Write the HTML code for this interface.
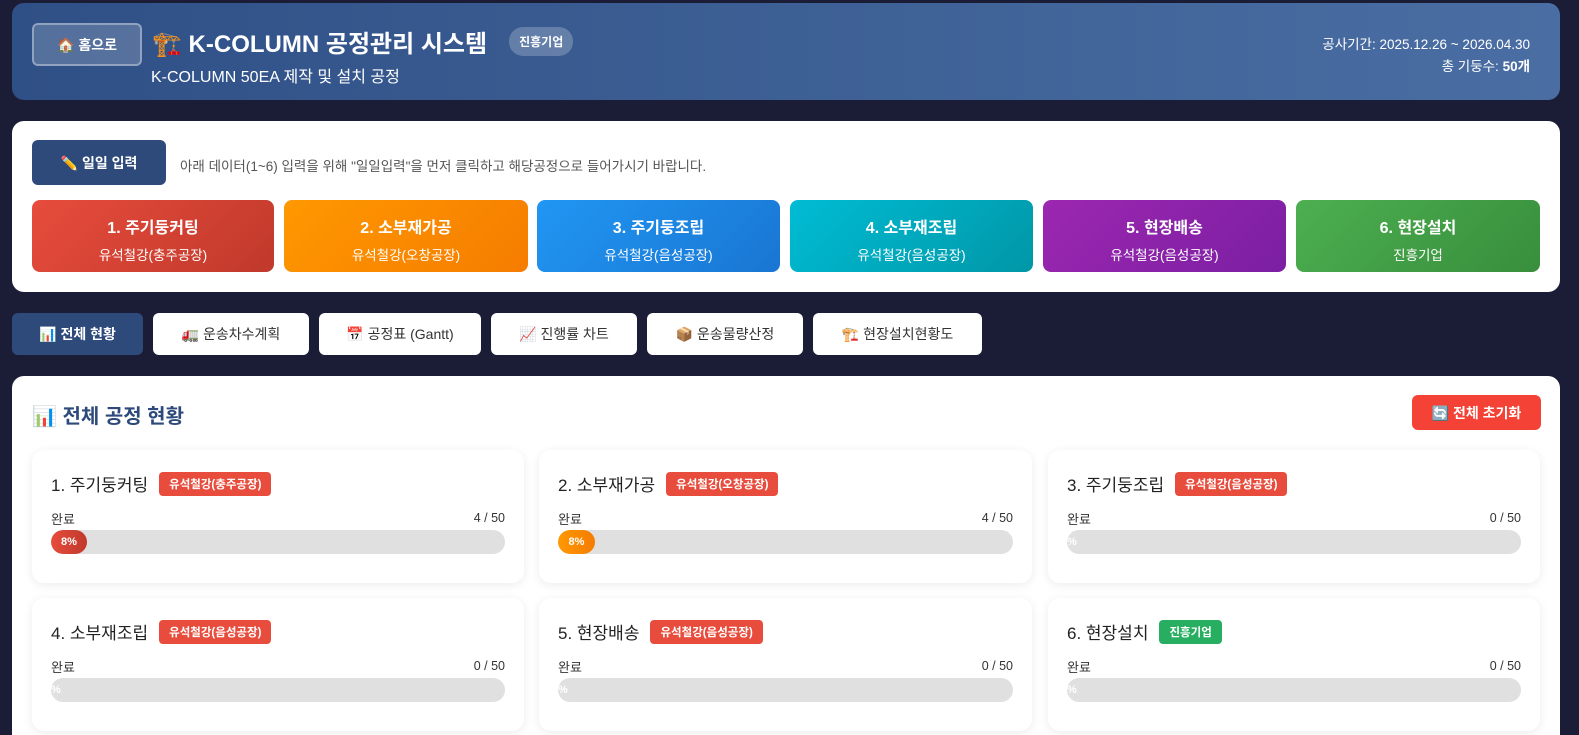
<!DOCTYPE html>
<html><head><meta charset="utf-8"><style>
*{box-sizing:border-box;margin:0;padding:0}
html,body{overflow:hidden}
body{width:1579px;height:735px;background:#1b1d36;font-family:"Liberation Sans","Noto Sans CJK KR",sans-serif;position:relative}
.hdr{position:absolute;left:12px;top:3px;width:1548px;height:97px;border-radius:12px;background:linear-gradient(90deg,#2f5086,#4a6ea3);color:#fff}
.home{position:absolute;left:20px;top:20px;width:110px;height:43px;border:2px solid rgba(255,255,255,.35);border-radius:6px;background:rgba(255,255,255,.18);font-size:14px;font-weight:bold;display:flex;align-items:center;justify-content:center;gap:6px}
.title{position:absolute;left:140px;top:21px;font-size:24px;font-weight:bold;display:flex;align-items:center;gap:8px}
.badge{font-size:12px;font-weight:bold;background:rgba(255,255,255,.22);border-radius:14px;padding:6px 10px;margin-left:14px}
.sub{position:absolute;left:139px;top:60px;font-size:16px}
.info{position:absolute;right:30px;top:31px;text-align:right;font-size:13.5px;line-height:22px}
.panel{position:absolute;left:12px;top:121px;width:1548px;height:171px;background:#fff;border-radius:12px}
.daily{position:absolute;left:20px;top:19px;width:134px;height:45px;background:#2d4a7b;color:#fff;border-radius:6px;font-size:14px;font-weight:bold;display:flex;align-items:center;justify-content:center;gap:6px}
.note{position:absolute;left:168px;top:34px;font-size:13.5px;color:#555}
.step{position:absolute;top:79px;height:72px;border-radius:8px;color:#fff;text-align:center}
.step b{display:block;font-size:16px;margin-top:14px}
.step span{display:block;font-size:13.5px;margin-top:6px}
.tab{position:absolute;top:313px;height:42px;border-radius:6px;background:#fff;color:#333;font-size:14px;display:flex;align-items:center;justify-content:center;gap:6px}
.main{position:absolute;left:12px;top:376px;width:1548px;height:359px;background:#fff;border-radius:12px 12px 0 0}
.mt{position:absolute;left:20px;top:24px;font-size:20px;font-weight:bold;color:#2d4a7b}
.reset{position:absolute;right:19px;top:19px;width:129px;height:35px;background:#f44336;color:#fff;border-radius:6px;font-size:14px;font-weight:bold;display:flex;align-items:center;justify-content:center;gap:5px}
.card{position:absolute;width:492px;height:133px;background:#fff;border-radius:12px;box-shadow:0 2px 10px rgba(0,0,0,.08)}
.ct{position:absolute;left:19px;top:21px;font-size:17px;color:#222;display:flex;align-items:center;gap:11px}
.tag{font-size:11.5px;font-weight:bold;color:#fff;background:#e74c3c;border-radius:4px;padding:4px 10px}
.lbl{position:absolute;left:19px;top:59px;font-size:13px;color:#333}
.cnt{position:absolute;right:19px;top:61px;font-size:12.5px;color:#333}
.bar{position:absolute;left:19px;top:80px;right:19px;height:24px;background:#e0e0e0;border-radius:12px;overflow:hidden;color:#fff;font-size:11px;font-weight:bold;line-height:24px}
.fill{height:24px;border-radius:12px;color:#fff;font-size:11px;font-weight:bold;display:flex;align-items:center;justify-content:center}
</style></head><body>
<div class="hdr">
 <div class="home">🏠 홈으로</div>
 <div class="title">🏗️ K-COLUMN 공정관리 시스템 <span class="badge">진흥기업</span></div>
 <div class="sub">K-COLUMN 50EA 제작 및 설치 공정</div>
 <div class="info">공사기간: 2025.12.26 ~ 2026.04.30<br>총 기둥수: <b>50개</b></div>
</div>
<div class="panel">
 <div class="daily">✏️ 일일 입력</div>
 <div class="note">아래 데이터(1~6) 입력을 위해 "일일입력"을 먼저 클릭하고 해당공정으로 들어가시기 바랍니다.</div>
 <div class="step" style="left:20px;width:242px;background:linear-gradient(135deg,#e74c3c,#c0392b)"><b>1. 주기둥커팅</b><span>유석철강(충주공장)</span></div>
 <div class="step" style="left:272px;width:244px;background:linear-gradient(135deg,#ff9800,#f57c00)"><b>2. 소부재가공</b><span>유석철강(오창공장)</span></div>
 <div class="step" style="left:525px;width:243px;background:linear-gradient(135deg,#2196f3,#1976d2)"><b>3. 주기둥조립</b><span>유석철강(음성공장)</span></div>
 <div class="step" style="left:778px;width:243px;background:linear-gradient(135deg,#00bcd4,#0097a7)"><b>4. 소부재조립</b><span>유석철강(음성공장)</span></div>
 <div class="step" style="left:1031px;width:243px;background:linear-gradient(135deg,#9c27b0,#7b1fa2)"><b>5. 현장배송</b><span>유석철강(음성공장)</span></div>
 <div class="step" style="left:1284px;width:244px;background:linear-gradient(135deg,#4caf50,#388e3c)"><b>6. 현장설치</b><span>진흥기업</span></div>
</div>
<div class="tab" style="left:12px;width:131px;background:#2d4a7b;color:#fff;font-weight:bold">📊 전체 현황</div>
<div class="tab" style="left:153px;width:156px">🚛 운송차수계획</div>
<div class="tab" style="left:319px;width:162px">📅 공정표 (Gantt)</div>
<div class="tab" style="left:491px;width:146px">📈 진행률 차트</div>
<div class="tab" style="left:647px;width:156px">📦 운송물량산정</div>
<div class="tab" style="left:813px;width:169px">🏗️ 현장설치현황도</div>
<div class="main">
 <div class="mt">📊 전체 공정 현황</div>
 <div class="reset">🔄 전체 초기화</div>
 <div class="card" style="left:20px;top:74px"><div class="ct">1. 주기둥커팅 <span class="tag">유석철강(충주공장)</span></div><div class="lbl">완료</div><div class="cnt">4 / 50</div><div class="bar"><div class="fill" style="width:36px;background:linear-gradient(90deg,#e74c3c,#c0392b)">8%</div></div></div>
 <div class="card" style="left:527px;top:74px;width:493px"><div class="ct">2. 소부재가공 <span class="tag">유석철강(오창공장)</span></div><div class="lbl">완료</div><div class="cnt">4 / 50</div><div class="bar"><div class="fill" style="width:37px;background:linear-gradient(90deg,#ff9800,#f57c00)">8%</div></div></div>
 <div class="card" style="left:1036px;top:74px"><div class="ct">3. 주기둥조립 <span class="tag">유석철강(음성공장)</span></div><div class="lbl">완료</div><div class="cnt">0 / 50</div><div class="bar">%</div></div>
 <div class="card" style="left:20px;top:222px"><div class="ct">4. 소부재조립 <span class="tag">유석철강(음성공장)</span></div><div class="lbl">완료</div><div class="cnt">0 / 50</div><div class="bar">%</div></div>
 <div class="card" style="left:527px;top:222px;width:493px"><div class="ct">5. 현장배송 <span class="tag">유석철강(음성공장)</span></div><div class="lbl">완료</div><div class="cnt">0 / 50</div><div class="bar">%</div></div>
 <div class="card" style="left:1036px;top:222px"><div class="ct">6. 현장설치 <span class="tag" style="background:#27ae60">진흥기업</span></div><div class="lbl">완료</div><div class="cnt">0 / 50</div><div class="bar">%</div></div>
</div>
</body></html>
